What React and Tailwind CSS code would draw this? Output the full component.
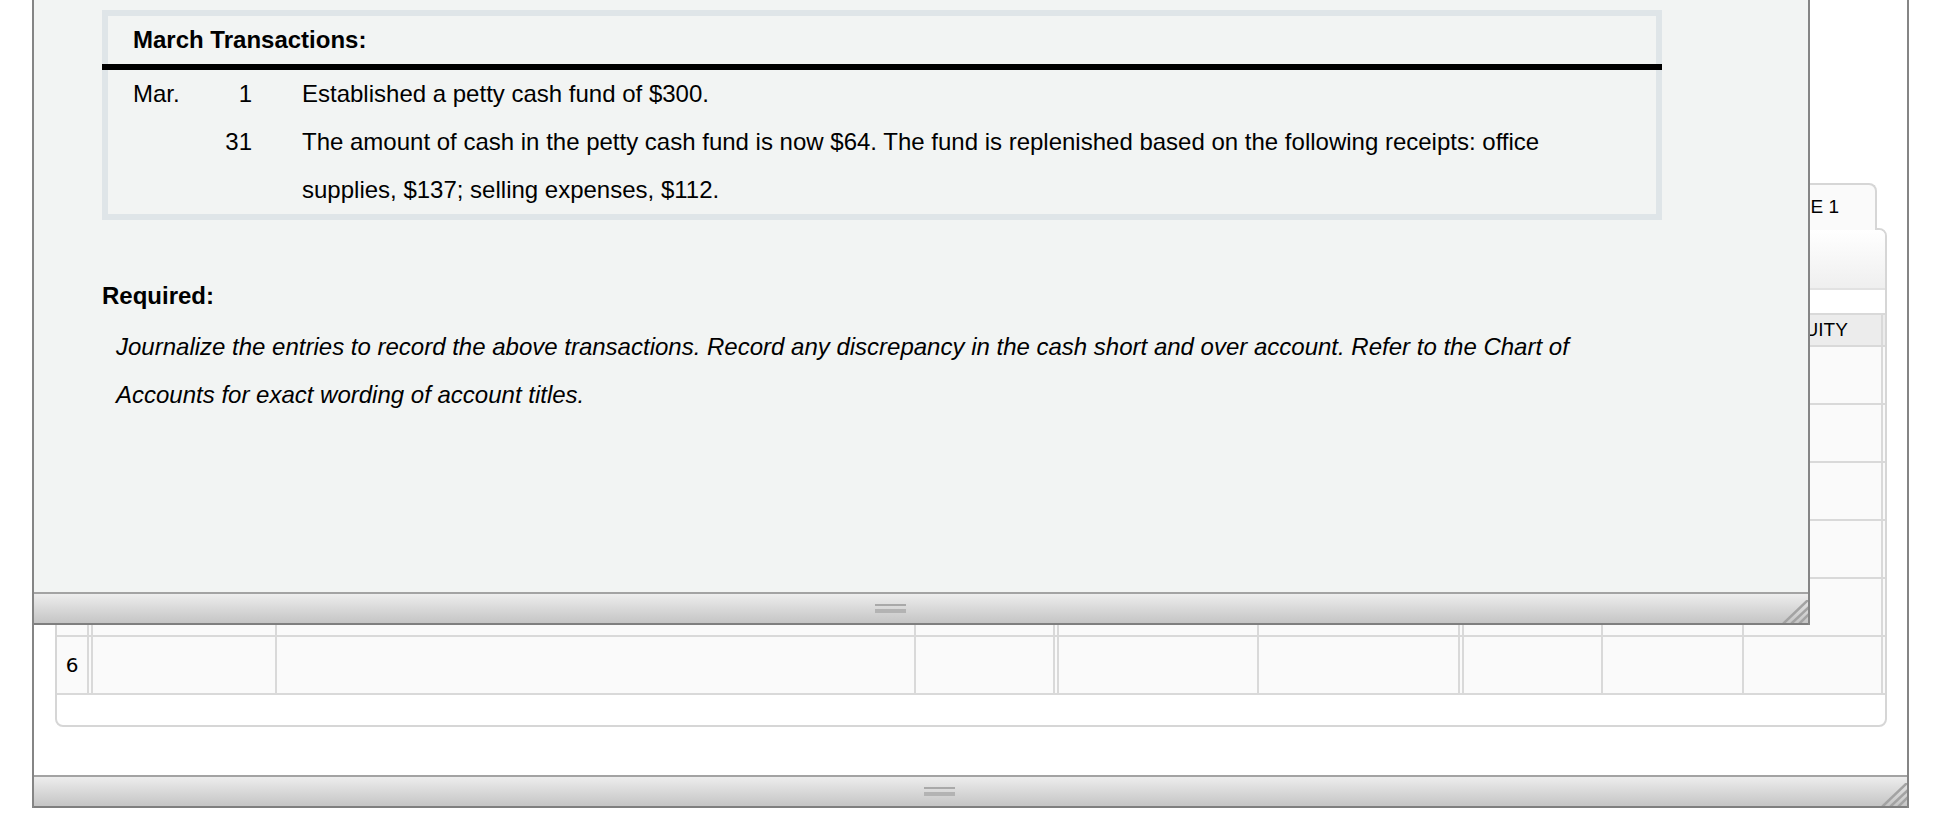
import React from "react";

const columns = ["", "", "", "", "", "", "", "", "EQUITY"];
const colClass = [
  "border-r-[6px] border-double",
  "border-r-2",
  "border-r-2",
  "border-r-[6px] border-double",
  "border-r-2",
  "border-r-[6px] border-double",
  "border-r-2",
  "border-r-2",
  "border-r-2",
];

const ResizeBar = ({ handleLeft }) => (
  <div className="relative flex items-center h-[33px] border-t-2 border-b-2 border-t-[#a3a3a3] border-b-[#7f7f7f] bg-linear-to-b from-[#ededed] to-[#c5c5c5]">
    <div className="flex flex-col gap-[3px]" style={{ marginLeft: handleLeft }}>
      <div className="w-[31px] h-[2px] bg-[#a9a9a9]" />
      <div className="w-[31px] h-[4px] bg-[#b3b3b3] blur-[0.5px]" />
    </div>
    <svg
      className="absolute right-0 bottom-0"
      width="26"
      height="23"
      viewBox="0 0 26 23"
    >
      <g stroke="#a3a3a3" strokeWidth="2.5" strokeLinecap="square">
        <line x1="2" y1="23" x2="26" y2="0" />
        <line x1="10" y1="23" x2="26" y2="8" />
        <line x1="18" y1="23" x2="26" y2="15" />
      </g>
    </svg>
  </div>
);

const TransactionRow = ({ month, day, children }) => (
  <div className="flex pl-[25px]">
    <div className="w-[60px] shrink-0">{month}</div>
    <div className="w-[59px] shrink-0 text-right">{day}</div>
    <div className="ml-[50px] w-[1298px]">{children}</div>
  </div>
);

const JournalRow = ({ number, last }) => (
  <div className="grid grid-cols-[36px_184px_639px_143px_200px_205px_139px_141px_139px] h-[58px] border-b-2 border-[#d9d9d9] bg-[#fafafa]">
    {colClass.map((c, i) => (
      <div
        key={i}
        className={`${c} border-[#d9d9d9] flex items-center justify-center font-['DejaVu_Sans',sans-serif] text-[20px] text-black`}
      >
        {i === 0 && last ? number : ""}
      </div>
    ))}
  </div>
);

export default function App() {
  return (
    <div className="relative w-[1954px] h-[826px] overflow-hidden bg-white font-['Liberation_Sans',Arial,sans-serif] text-black">
      {/* back window */}
      <div className="ml-[32px] w-[1877px] border-x-2 border-[#858585] flex flex-col">
        <div className="h-[775px] bg-white flex flex-col pt-[183px]">
          <div className="flex justify-end mr-[30px]">
            <div className="relative z-10 -mb-[2px] h-[47px] pl-[40px] pr-[36px] flex items-center bg-[#fafafa] border-2 border-b-0 border-[#d6d6d6] rounded-t-[8px] text-[19px]">
              PAGE 1
            </div>
          </div>
          <div className="ml-[21px] mr-[20px] h-[499px] border-2 border-[#d6d6d6] rounded-[8px] flex flex-col bg-white">
            <div className="h-[60px] bg-linear-to-b from-white to-[#efefef] border-b-2 border-[#e2e2e2] rounded-tr-[6px]" />
            <div className="h-[23px]" />
            <div className="grid grid-cols-[36px_184px_639px_143px_200px_205px_139px_141px_139px] h-[34px] border-y-2 border-[#d9d9d9] bg-[#ececec]">
              {columns.map((label, i) => (
                <div
                  key={i}
                  className={`${colClass[i]} border-[#d9d9d9] flex items-center justify-center text-[19px]`}
                >
                  {label}
                </div>
              ))}
            </div>
            {[1, 2, 3, 4, 5, 6].map((n) => (
              <JournalRow key={n} number={n} last={n === 6} />
            ))}
          </div>
        </div>
        <ResizeBar handleLeft={890} />
      </div>

      {/* front window: problem text */}
      <div className="absolute z-20 left-[32px] top-0 w-[1778px] border-x-2 border-[#858585] flex flex-col">
        <div className="h-[592px] bg-[#f2f4f3] pl-[68px] pt-[10px] text-[24px] leading-[48px]">
          <div className="w-[1560px] border-[6px] border-[#dfe5e8]">
            <div className="h-[48px] pl-[25px] font-bold">March Transactions:</div>
            <div className="-mx-[6px] h-[6px] bg-black" />
            <TransactionRow month="Mar." day="1">
              Established a petty cash fund of $300.
            </TransactionRow>
            <TransactionRow month="" day="31">
              The amount of cash in the petty cash fund is now $64. The fund is
              replenished based on the following receipts: office supplies,
              $137; selling expenses, $112.
            </TransactionRow>
          </div>

          <div className="mt-[52px] font-bold">Required:</div>
          <p className="mt-[3px] pl-[14px] w-[1564px] italic">
            Journalize the entries to record the above transactions. Record any
            discrepancy in the cash short and over account. Refer to the Chart
            of Accounts for exact wording of account titles.
          </p>
        </div>
        <ResizeBar handleLeft={841} />
      </div>
    </div>
  );
}
